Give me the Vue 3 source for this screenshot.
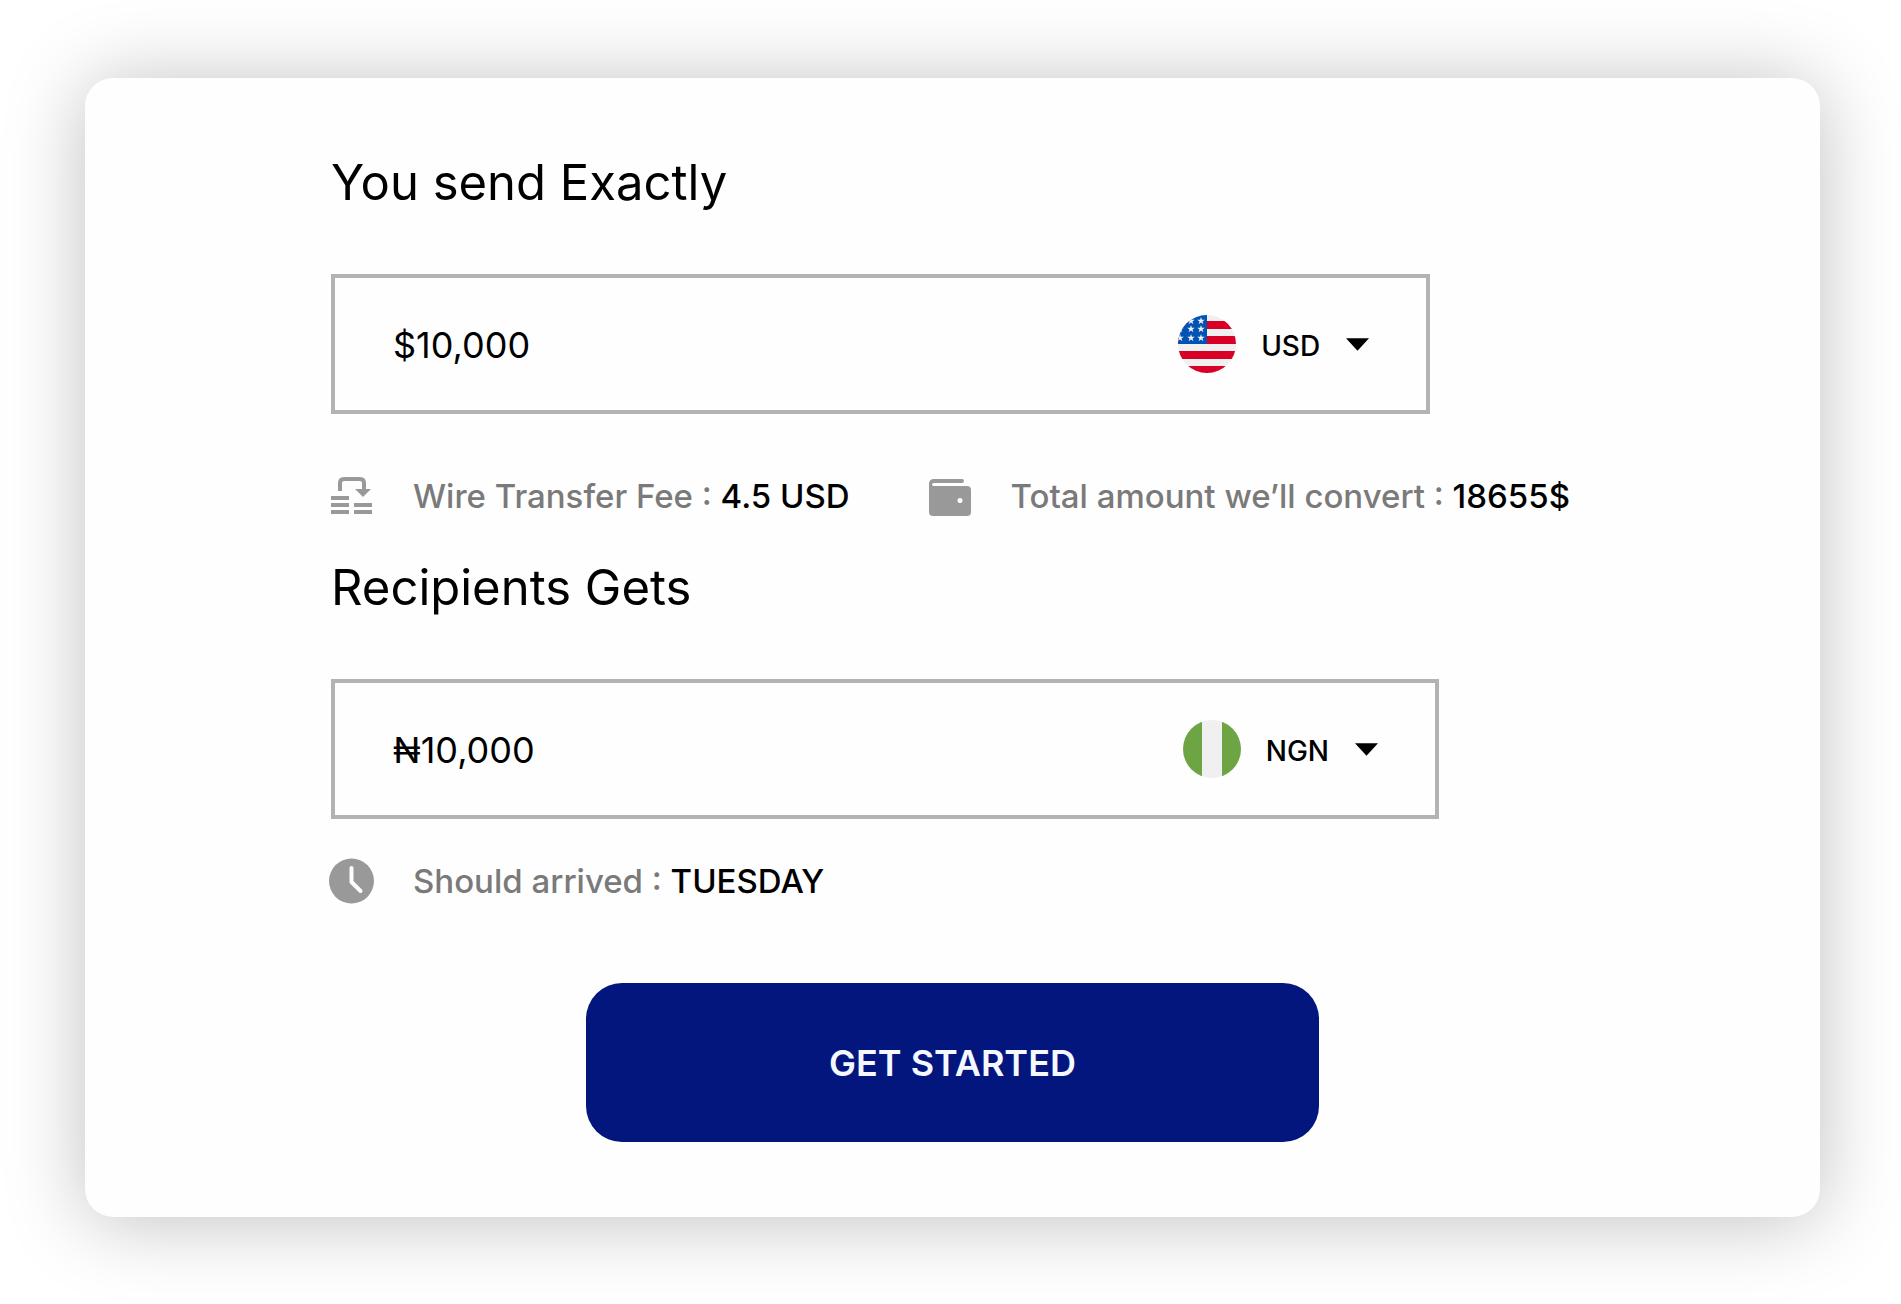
<script setup>
import { ref } from 'vue'

const sendAmount = ref('$10,000')
const sendCurrency = ref('USD')
const receiveAmount = ref('₦10,000')
const receiveCurrency = ref('NGN')
const currencies = ['USD', 'NGN']
const stars = [
  [13, 6], [23, 6],
  [2, 14], [13, 14], [23, 14],
  [2, 23], [13, 23], [23, 23],
]
</script>

<template>
  <main class="page">
    <form class="card" @submit.prevent>
      <label class="title" for="send">You send Exactly</label>
      <div class="field">
        <input id="send" v-model="sendAmount" class="amount" type="text" />
        <svg class="flag" viewBox="0 0 58 58" aria-hidden="true">
          <defs>
            <clipPath id="disc"><circle cx="29" cy="29" r="29" /></clipPath>
            <path id="star" d="M0-4 .9-1.200H3.800L1.500.5 2.400 3.200 0 1.500-2.400 3.200-1.500.5-3.800-1.200H-.9z" fill="#f0f0f0" />
          </defs>
          <g clip-path="url(#disc)">
            <rect width="58" height="58" fill="#f0f0f0" />
            <path d="M0 6h58v8H0zM0 21h58v8H0zM0 36h58v8H0zM0 51h58v8H0z" fill="#d80027" />
            <rect width="29" height="29" fill="#0052b4" />
            <use v-for="([x, y], i) in stars" :key="i" href="#star" :x="x" :y="y" />
          </g>
        </svg>
        <div class="picker">
          <select v-model="sendCurrency" class="currency" aria-label="Send currency">
            <option v-for="c in currencies" :key="c">{{ c }}</option>
          </select>
          <svg class="caret" viewBox="0 0 24 13" aria-hidden="true"><path d="M0 0h24L12 13z" /></svg>
        </div>
      </div>

      <div class="facts">
        <p class="fact">
          <svg class="icon" viewBox="0 0 42 40" aria-hidden="true">
            <path d="M9 15V7q0-4 4-4h16q4 0 4 4v7" fill="none" stroke="#999" stroke-width="4" />
            <path d="M24 13h16l-8 8zM0 20h18v4H0zM0 27h18v4H0zM0 34h18v4H0zM23 27h18v4H23zM23 34h18v4H23z" />
          </svg>
          <span>Wire Transfer Fee : <strong>4.5 USD</strong></span>
        </p>
        <p class="fact">
          <svg class="icon" viewBox="0 0 42 40" aria-hidden="true">
            <path fill-rule="evenodd" d="M5 3h28q2 0 2 2t-2 2H5q-2 0-2 1.500T5 10h33q4 0 4 4v22q0 4-4 4H4q-4 0-4-4V8q0-5 5-5zM31 22a2.500 2.500 0 1 0 0 5 2.500 2.500 0 0 0 0-5z" />
          </svg>
          <span>Total amount we’ll convert : <strong>18655$</strong></span>
        </p>
      </div>

      <label class="title" for="receive">Recipients Gets</label>
      <div class="field">
        <input id="receive" v-model="receiveAmount" class="amount" type="text" />
        <svg class="flag" viewBox="0 0 58 58" aria-hidden="true">
          <g clip-path="url(#disc)">
            <rect width="58" height="58" fill="#f0f0f0" />
            <path d="M0 0h19v58H0zM39 0h19v58H39z" fill="#6da544" />
          </g>
        </svg>
        <div class="picker">
          <select v-model="receiveCurrency" class="currency" aria-label="Receive currency">
            <option v-for="c in currencies" :key="c">{{ c }}</option>
          </select>
          <svg class="caret" viewBox="0 0 24 13" aria-hidden="true"><path d="M0 0h24L12 13z" /></svg>
        </div>
      </div>

      <p class="fact arrival">
        <svg class="icon" viewBox="0 0 42 40" aria-hidden="true">
          <circle cx="20.500" cy="20" r="22.500" />
          <path d="M20.500 7v14l9 9" fill="none" stroke="#fefefe" stroke-width="4" stroke-linecap="round" stroke-linejoin="round" />
        </svg>
        <span>Should arrived : <strong>TUESDAY</strong></span>
      </p>

      <button class="start" type="submit">GET STARTED</button>
    </form>
  </main>
</template>

<style>
body {
  margin: 0;
  background: #fff;
}
</style>

<style scoped>
.page {
  padding: 78px 81px 87px 85px;
  font-family: Inter, sans-serif;
  color: #000;
}
.card {
  display: flex;
  flex-direction: column;
  align-items: flex-start;
  padding: 75px 246px;
  border-radius: 28px;
  background: #fefefe;
  box-shadow: 0 4px 80px rgba(0, 0, 0, 0.25);
}
.title {
  font-size: 49px;
  line-height: 60px;
  margin-bottom: 61px;
}
.field {
  display: flex;
  align-items: center;
  box-sizing: border-box;
  height: 140px;
  max-width: 100%;
  padding: 0 57px 0 58px;
  border: 4px solid #b3b3b3;
}
.amount {
  field-sizing: content;
  min-width: 0;
  margin-right: 648px;
  padding: 2px 0 0;
  border: 0;
  background: none;
  font: 400 36px/44px Inter, sans-serif;
  color: inherit;
}
.flag {
  flex: none;
  width: 58px;
  height: 58px;
  margin-right: 25px;
}
.picker {
  position: relative;
  flex: none;
}
.currency {
  appearance: none;
  field-sizing: content;
  padding: 3px 49px 0 0;
  border: 0;
  background: none;
  font: 500 28px/36px Inter, sans-serif;
  color: inherit;
}
.caret {
  position: absolute;
  top: 13px;
  right: 0;
  width: 23px;
  height: 13px;
  pointer-events: none;
}
.facts {
  display: flex;
  gap: 79px;
  margin: 62px 0 42px;
}
.fact {
  display: flex;
  gap: 40px;
  margin: 0;
  font-size: 33px;
  font-weight: 500;
  line-height: 40px;
  white-space: nowrap;
  color: #7a7a7a;
}
.fact strong {
  font-weight: 500;
  color: #000;
}
.icon {
  flex: none;
  width: 42px;
  height: 40px;
  overflow: visible;
  fill: #999;
}
.arrival {
  margin: 42px 0 82px;
}
.start {
  align-self: center;
  width: 733px;
  max-width: 100%;
  height: 159px;
  border: 0;
  border-radius: 36px;
  background: #02167d;
  font: 600 36px/44px Inter, sans-serif;
  color: #f5f8ff;
}
</style>
